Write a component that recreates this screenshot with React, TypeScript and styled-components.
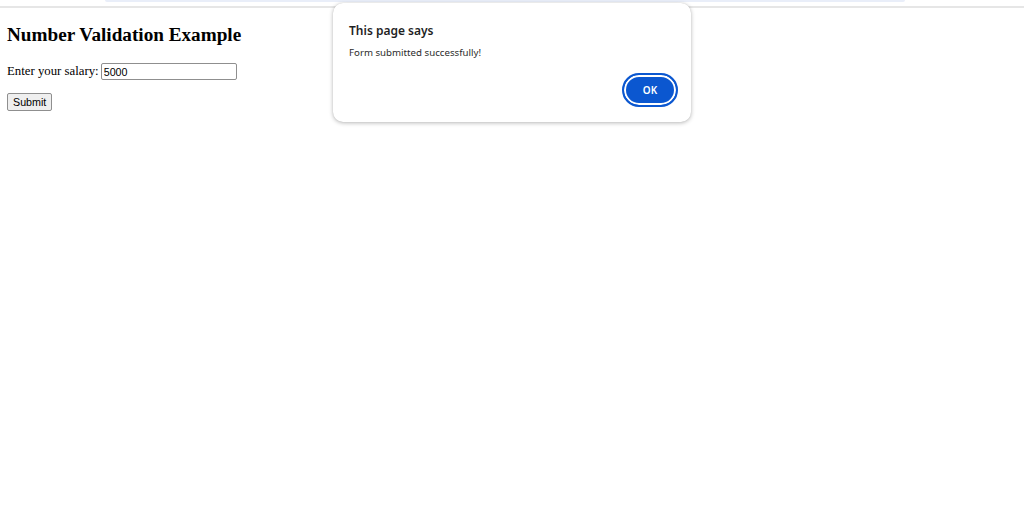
import * as React from 'react';
import styled, { createGlobalStyle } from 'styled-components';

const GlobalStyle = createGlobalStyle`
  html, body {
    margin: 0;
    padding: 0;
    background: #fff;
  }
  body {
    font-family: "Liberation Serif", "Times New Roman", serif;
    color: #000;
  }
`;

const Viewport = styled.div`
  position: relative;
  width: 1024px;
  height: 509px;
  overflow: hidden;
  background: #fff;
`;

const ChromeEdge = styled.div`
  height: 6px;
  border-bottom: 2px solid #e6e6e6;
  display: flex;
  justify-content: flex-start;
  box-sizing: content-box;
`;

const TabStrip = styled.div`
  margin-left: 105px;
  width: 800px;
  height: 2px;
  background: #e9eef9;
  border-radius: 0 0 3px 3px;
`;

const Page = styled.main`
  padding: 0 7px;
`;

const Heading = styled.h2`
  margin: 16px 0;
  font-size: 19.2px;
  line-height: 22px;
  font-weight: bold;
`;

const FieldRow = styled.div`
  display: flex;
  align-items: center;
  gap: 2px;
  height: 19px;
  font-size: 12.8px;
  margin-bottom: 11px;
`;

const NumberInput = styled.input`
  box-sizing: border-box;
  width: 136px;
  height: 17px;
  padding: 0 2px;
  border: 1px solid #8f8f8f;
  border-radius: 2px;
  font-family: "Liberation Sans", Arial, sans-serif;
  font-size: 10.7px;
  color: #000;
  outline: none;
`;

const SubmitButton = styled.button`
  box-sizing: border-box;
  height: 18px;
  padding: 0 5px;
  background: #efefef;
  border: 1px solid #8f8f8f;
  border-radius: 2px;
  font-family: "Liberation Sans", Arial, sans-serif;
  font-size: 10.7px;
  color: #000;
`;

const Dialog = styled.div`
  position: absolute;
  top: 3px;
  left: 333px;
  width: 358px;
  height: 119px;
  box-sizing: border-box;
  padding: 19px 13px 15px 16px;
  background: #fff;
  border-radius: 10px;
  box-shadow: 0 1px 4px rgba(0, 0, 0, 0.28), 0 0 1px rgba(0, 0, 0, 0.15);
  display: flex;
  flex-direction: column;
  font-family: "Noto Sans", "Open Sans", sans-serif;
`;

const DialogTitle = styled.div`
  font-size: 12px;
  font-weight: 600;
  color: #1f1f1f;
  line-height: 17px;
`;

const DialogMessage = styled.div`
  margin-top: 7px;
  font-size: 9.7px;
  color: #2b2b2b;
  line-height: 13px;
`;

const DialogActions = styled.div`
  margin-top: auto;
  display: flex;
  justify-content: flex-end;
`;

const OkButton = styled.button`
  box-sizing: border-box;
  width: 56px;
  height: 34px;
  border-radius: 17px;
  border: 2px solid #0b57d0;
  background: #0b57d0;
  box-shadow: inset 0 0 0 2px #fff;
  color: #fff;
  font-family: "Noto Sans", "Open Sans", sans-serif;
  font-size: 10px;
  font-weight: 600;
  padding: 0;
`;

export default function App() {
  return (
    <Viewport>
      <GlobalStyle />
      <ChromeEdge>
        <TabStrip />
      </ChromeEdge>
      <Page>
        <Heading>Number Validation Example</Heading>
        <FieldRow>
          <span>Enter your salary:</span>
          <NumberInput type="text" defaultValue="5000" />
        </FieldRow>
        <SubmitButton>Submit</SubmitButton>
      </Page>
      <Dialog>
        <DialogTitle>This page says</DialogTitle>
        <DialogMessage>Form submitted successfully!</DialogMessage>
        <DialogActions>
          <OkButton>OK</OkButton>
        </DialogActions>
      </Dialog>
    </Viewport>
  );
}
